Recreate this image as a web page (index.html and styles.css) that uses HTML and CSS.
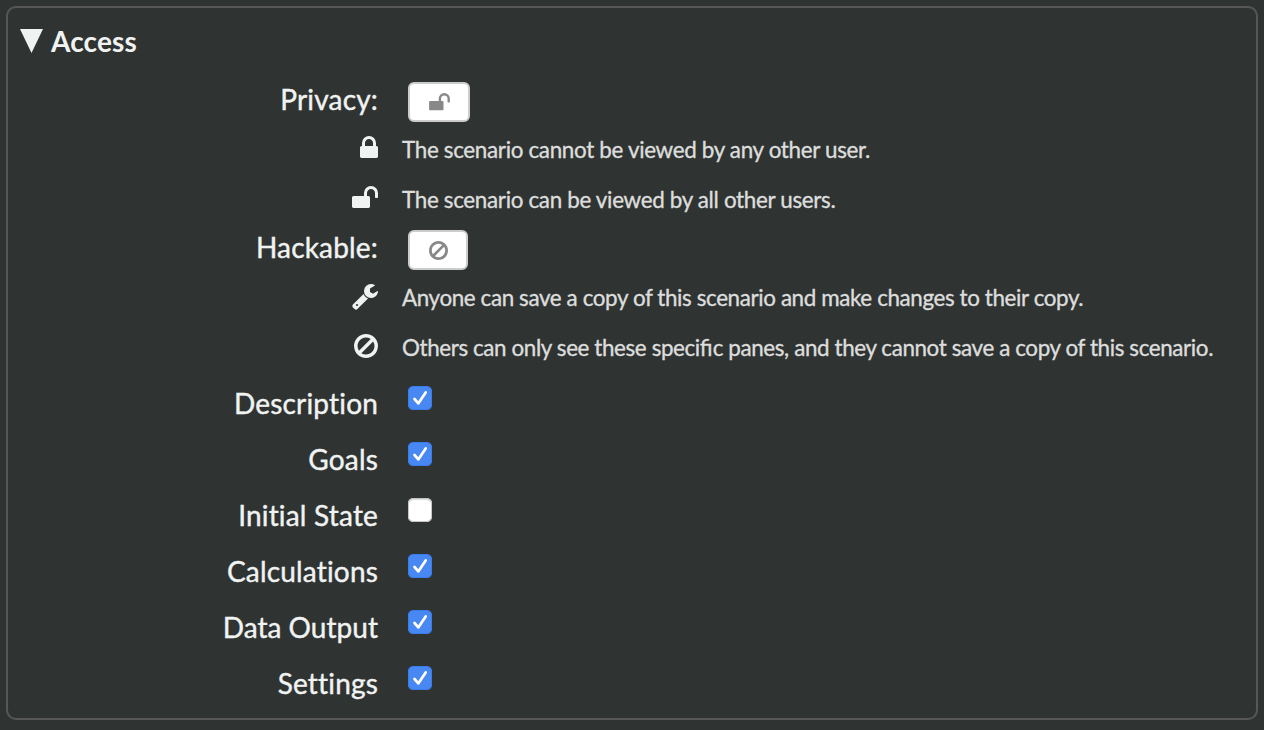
FILE: index.html
```
<!DOCTYPE html>
<html lang="en">
<head>
<meta charset="utf-8">
<title>Access</title>
<link rel="stylesheet" href="styles.css">
</head>
<body>
<svg class="defs" aria-hidden="true">
  <symbol id="lock" viewBox="320 128 1152 1408"><path d="M640 768h512v-192q0-106-75-181t-181-75-181 75-75 181v192zm832 96v576q0 40-28 68t-68 28h-960q-40 0-68-28t-28-68v-576q0-40 28-68t68-28h32v-192q0-184 132-316t316-132 316 132 132 316v192h32q40 0 68 28t28 68z"/></symbol>
  <symbol id="unlock" viewBox="64 128 1664 1408"><path d="M1728 576v256q0 26-19 45t-45 19h-64q-26 0-45-19t-19-45v-256q0-106-75-181t-181-75-181 75-75 181v192h96q40 0 68 28t28 68v576q0 40-28 68t-68 28h-960q-40 0-68-28t-28-68v-576q0-40 28-68t68-28h672v-192q0-185 131.5-316.5t316.5-131.5 316.5 131.5 131.5 316.5z"/></symbol>
  <symbol id="wrench" viewBox="64 128 1664 1664"><path d="M448 1472q0-26-19-45t-45-19-45 19-19 45 19 45 45 19 45-19 19-45zm644-420l-682 682q-37 37-90 37-52 0-91-37l-106-108q-38-36-38-90 0-53 38-91l681-681q39 98 114.5 173.5t173.5 114.5zm634-435q0 39-23 106-47 134-164.5 217.5t-258.5 83.5q-185 0-316.5-131.5t-131.5-316.5 131.5-316.5 316.5-131.5q58 0 121.5 16.5t107.5 46.5q16 11 16 28t-16 28l-293 169v224l193 107q5-3 79-48.5t135.5-81 70.5-35.5q15 0 23.5 10t8.5 25z"/></symbol>
  <symbol id="ban" viewBox="128 123 1536 1541"><path d="M1440 893q0-161-87-295l-754 753q137 89 297 89 111 0 211.5-43.5t173.5-116.5 116-174.5 43-212.5zm-999 299l755-754q-135-91-300-91-148 0-273 73t-198 199-73 274q0 162 89 299zm1223-299q0 157-61 300t-163.5 246-245 164-298.5 61-298.5-61-245-164-163.5-246-61-300 61-299.5 163.5-245.5 245-164 298.5-61 298.5 61 245 164 163.5 245.5 61 299.5z"/></symbol>
  <symbol id="check" viewBox="0 0 24 24"><path d="M6.5 13 10.3 17.4 17.7 6.4" fill="none" stroke="#fff" stroke-width="2.7" stroke-linecap="round" stroke-linejoin="round"/></symbol>
</svg>
<section class="panel">
  <h2 class="title"><svg class="arrow" viewBox="0 0 24 24" preserveAspectRatio="none"><path d="M0 0H24L12 24Z"/></svg><span>Access</span></h2>

  <div class="row setting"><span class="label">Privacy:</span><button class="toggle toggle-lock"><svg class="unlock-small"><use href="#unlock"/></svg></button></div>
  <div class="row help"><span class="label"><svg class="lock"><use href="#lock"/></svg></span><span class="text">The scenario cannot be viewed by any other user.</span></div>
  <div class="row help"><span class="label"><svg class="unlock"><use href="#unlock"/></svg></span><span class="text">The scenario can be viewed by all other users.</span></div>

  <div class="row setting"><span class="label">Hackable:</span><button class="toggle toggle-ban"><svg class="ban-small"><use href="#ban"/></svg></button></div>
  <div class="row help hack"><span class="label"><svg class="wrench"><use href="#wrench"/></svg></span><span class="text">Anyone can save a copy of this scenario and make changes to their copy.</span></div>
  <div class="row help hack"><span class="label"><svg class="ban"><use href="#ban"/></svg></span><span class="text">Others can only see these speci<span class="ligature">fi</span>c panes, and they cannot save a copy of this scenario.</span></div>

  <div class="panes">
    <div class="row pane"><span class="label">Description</span><span class="box checked"><svg><use href="#check"/></svg></span></div>
    <div class="row pane"><span class="label">Goals</span><span class="box checked"><svg><use href="#check"/></svg></span></div>
    <div class="row pane"><span class="label">Initial State</span><span class="box"></span></div>
    <div class="row pane"><span class="label">Calculations</span><span class="box checked"><svg><use href="#check"/></svg></span></div>
    <div class="row pane"><span class="label wide">Data Output</span><span class="box checked"><svg><use href="#check"/></svg></span></div>
    <div class="row pane"><span class="label">Settings</span><span class="box checked"><svg><use href="#check"/></svg></span></div>
  </div>
</section>
</body>
</html>
```
FILE: styles.css
```
* { box-sizing: border-box; }

body {
  margin: 0;
  padding: 6px;
  height: 730px;
  background: #2f3432;
  color: #f1f3f2;
  font-family: Lato, sans-serif;
  font-size: 28px;
  line-height: 34px;
  overflow: hidden;
}

.defs { display: none; }

svg { display: block; fill: currentColor; }

.panel {
  width: 1252px;
  height: 714px;
  border: 2px solid #575757;
  border-radius: 10px;
}

.title {
  display: flex;
  align-items: center;
  gap: 8px;
  height: 68px;
  margin: 0;
  padding: 0 0 2px 12px;
  font-size: 28px;
  font-weight: 700;
  letter-spacing: 0.15px;
}

.arrow { width: 23px; height: 24px; }

.row {
  display: grid;
  grid-template-columns: 370px 1fr;
  align-items: center;
  white-space: nowrap;
}

.label {
  display: flex;
  justify-content: flex-end;
  padding-bottom: 2px;
  font-variant-ligatures: none;
  letter-spacing: 0.18px;
  -webkit-text-stroke: 0.4px currentColor;
}
.label.wide { letter-spacing: 0.03px; }

.setting { height: 48px; }

.toggle {
  display: flex;
  align-items: center;
  justify-content: center;
  height: 40px;
  margin: 4px 0 0 30px;
  padding: 0;
  border: 2px solid #ccc;
  border-radius: 6px;
  background: #fff;
  color: #888;
}
.toggle-lock { width: 62px; }
.toggle-ban { width: 60px; }

.help { height: 50px; }
.help .label { padding-bottom: 4px; }
.help.hack .label { padding-bottom: 2px; }
.text {
  padding: 2px 0 0 24px;
  color: #ddd;
  font-size: 22.4px;
  letter-spacing: -0.32px;
  -webkit-text-stroke: 0.35px currentColor;
}
.hack .text { letter-spacing: -0.385px; }
.ligature { letter-spacing: 0; }

.lock { width: 18px; height: 22px; }
.unlock { width: 26px; height: 22px; }
.wrench { width: 26px; height: 26px; margin-top: 2px; }
.ban { width: 24px; height: 24px; }
.unlock-small { width: 21px; height: 17.6px; }
.ban-small { width: 19px; height: 19px; }

.panes { padding-top: 4px; }
.pane { height: 56px; }

.box {
  width: 24px;
  height: 24px;
  margin: 0 0 12px 30px;
  border-radius: 5.5px;
  background: #fff;
  box-shadow: inset 0 0 0 1px #c4c4c4, inset 0 2px 1px #ddd;
}
.box.checked {
  background: #4888f3;
  box-shadow: inset 0 0 0 1px #3b7ced;
}
.box svg { width: 24px; height: 24px; }
```
